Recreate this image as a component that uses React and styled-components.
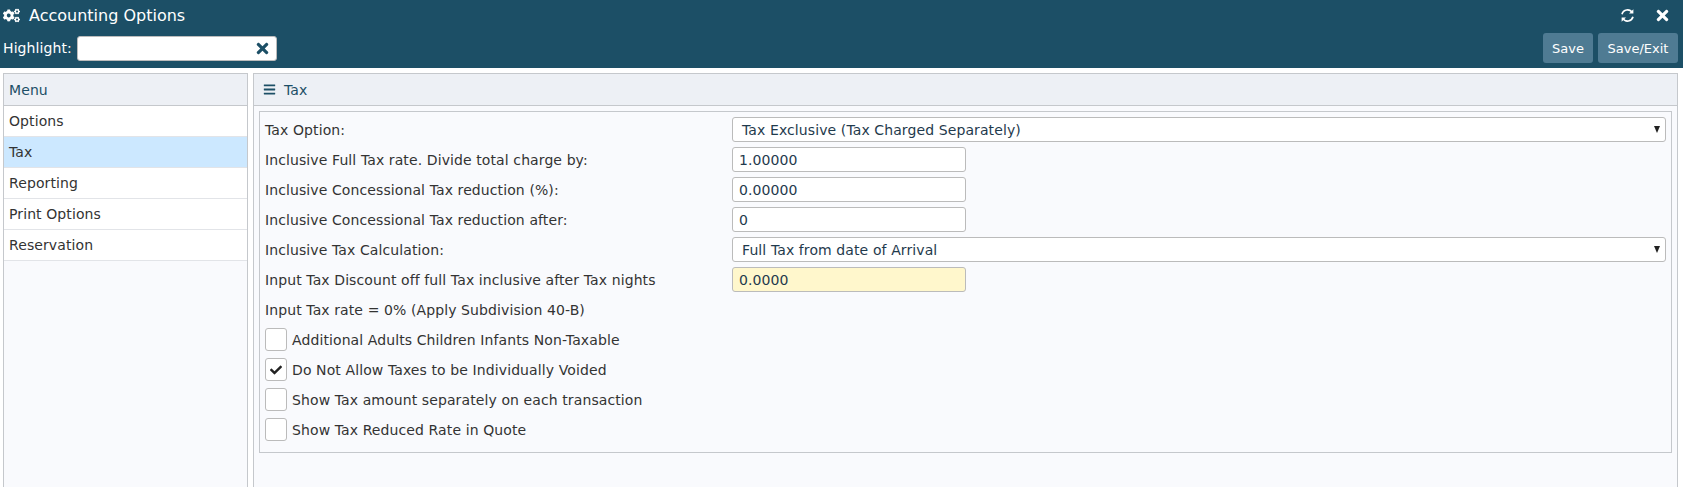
import React from 'react';
import styled, { createGlobalStyle } from 'styled-components';
import { FaCogs, FaCheck, FaBars, FaTimes } from 'react-icons/fa';

const GlobalStyle = createGlobalStyle`
  html, body {
    margin: 0;
    padding: 0;
    background: #fff;
  }
  body {
    font-family: "DejaVu Sans", Verdana, sans-serif;
    font-size: 14px;
    letter-spacing: 0.1px;
    color: #333;
  }
`;

const Page = styled.div`
  width: 1683px;
  height: 487px;
  display: flex;
  flex-direction: column;
  overflow: hidden;
`;

const Header = styled.header`
  height: 68px;
  background: #1c4f66;
  color: #fff;
  display: flex;
  flex-direction: column;
  flex: none;
`;

const TitleRow = styled.div`
  height: 30px;
  display: flex;
  align-items: center;
  padding: 0 12px 0 3px;
`;

const Title = styled.h1`
  margin: 0 0 0 9px;
  font-size: 16px;
  font-weight: 400;
  letter-spacing: 0;
  flex: 1;
`;

const IconButton = styled.span`
  display: flex;
  margin-left: ${p => p.$gap || 0}px;
`;

const ToolRow = styled.div`
  display: flex;
  align-items: center;
  padding: 3px 5px 0 3px;
`;

const HighlightLabel = styled.label`
  margin-right: 5px;
`;

const HighlightBox = styled.div`
  width: 200px;
  height: 25px;
  box-sizing: border-box;
  background: #fff;
  border: 1px solid #bbb;
  border-radius: 3px;
  display: flex;
  align-items: center;
  justify-content: flex-end;
  padding-right: 5px;
  flex: none;
`;

const Spacer = styled.div`
  flex: 1;
`;

const HeadButton = styled.button`
  width: ${p => p.$width}px;
  height: 30px;
  margin-left: 5px;
  padding: 0;
  border: 0;
  border-radius: 3px;
  background: #4f7b93;
  color: #fff;
  font: 13px "DejaVu Sans", Verdana, sans-serif;
`;

const Body = styled.div`
  flex: 1;
  display: flex;
  gap: 5px;
  padding: 5px 5px 0 3px;
  min-height: 0;
`;

const Panel = styled.section`
  box-sizing: border-box;
  width: ${p => (p.$width ? `${p.$width}px` : 'auto')};
  flex: ${p => (p.$width ? 'none' : 1)};
  border: 1px solid #c5c8cc;
  border-bottom: 0;
  background: #f9fafd;
  display: flex;
  flex-direction: column;
`;

const PanelHead = styled.div`
  height: 31px;
  flex: none;
  background: #edf0f5;
  border-bottom: 1px solid #c5c8cc;
  display: flex;
  align-items: center;
  padding-left: ${p => p.$pad}px;
  color: #1c4f66;
`;

const MenuItem = styled.div`
  height: 30px;
  display: flex;
  align-items: center;
  padding-left: 5px;
  background: ${p => (p.$active ? '#cce8ff' : '#fff')};
  border-bottom: 1px solid #e2e4e8;
`;

const HeadIcon = styled.span`
  display: flex;
  margin-right: 8px;
  color: #1c4f66;
`;

const FormBox = styled.div`
  margin: 5px 5px 0;
  height: 342px;
  box-sizing: border-box;
  border: 1px solid #c5c8cc;
  padding: 5px 5px 0;
  display: flex;
  flex-direction: column;
  gap: 5px;
`;

const Row = styled.div`
  height: 25px;
  display: flex;
  align-items: center;
  flex: none;
`;

const RowLabel = styled.label`
  width: 467px;
  flex: none;
`;

const Control = styled.div`
  box-sizing: border-box;
  height: 25px;
  border: 1px solid #bbb;
  border-radius: 3px;
  background: ${p => (p.$warn ? '#fff7cc' : '#fff')};
  display: flex;
  align-items: center;
  color: #1f3a4d;
`;

const TextInput = styled(Control)`
  width: 234px;
  padding-left: 6px;
`;

const SelectBox = styled(Control)`
  flex: 1;
  padding: 0 5px 0 9px;
  justify-content: space-between;
`;

const Caret = styled.span`
  width: 0;
  height: 0;
  border-left: 3.5px solid transparent;
  border-right: 3.5px solid transparent;
  border-top: 7px solid #222;
`;

const CheckBox = styled.span`
  box-sizing: border-box;
  width: 22px;
  height: 23px;
  border: 1px solid #bbb;
  border-radius: 3px;
  background: #fff;
  display: flex;
  align-items: center;
  justify-content: center;
  margin-right: 5px;
  flex: none;
  color: #222;
`;

const RefreshIcon = () => (
  <svg width="15" height="15" viewBox="0 0 15 15" fill="none" stroke="#fff" strokeWidth="1.7">
    <path d="M2 6.2A5.6 5.6 0 0 1 12.2 4.6" />
    <path d="M13 8.8A5.6 5.6 0 0 1 2.8 10.4" />
    <path d="M13.4 1.2v4.4H9z" fill="#fff" stroke="none" />
    <path d="M1.6 13.8V9.4H6z" fill="#fff" stroke="none" />
  </svg>
);

const menuItems = ['Options', 'Tax', 'Reporting', 'Print Options', 'Reservation'];

const checks = [
  { label: 'Additional Adults Children Infants Non-Taxable' },
  { label: 'Do Not Allow Taxes to be Individually Voided', checked: true },
  { label: 'Show Tax amount separately on each transaction' },
  { label: 'Show Tax Reduced Rate in Quote' },
];

export default function App() {
  return (
    <Page>
      <GlobalStyle />
      <Header>
        <TitleRow>
          <FaCogs size={17} color="#fff" />
          <Title>Accounting Options</Title>
          <IconButton>
            <RefreshIcon />
          </IconButton>
          <IconButton $gap={19}>
            <FaTimes size={17} color="#fff" />
          </IconButton>
        </TitleRow>
        <ToolRow>
          <HighlightLabel>Highlight:</HighlightLabel>
          <HighlightBox>
            <FaTimes size={17} color="#1c4f66" />
          </HighlightBox>
          <Spacer />
          <HeadButton $width={50}>Save</HeadButton>
          <HeadButton $width={80}>Save/Exit</HeadButton>
        </ToolRow>
      </Header>
      <Body>
        <Panel $width={245}>
          <PanelHead $pad={5}>Menu</PanelHead>
          {menuItems.map(item => (
            <MenuItem key={item} $active={item === 'Tax'}>
              {item}
            </MenuItem>
          ))}
        </Panel>
        <Panel>
          <PanelHead $pad={9}>
            <HeadIcon>
              <FaBars size={13} />
            </HeadIcon>
            Tax
          </PanelHead>
          <FormBox>
            <Row>
              <RowLabel>Tax Option:</RowLabel>
              <SelectBox>
                Tax Exclusive (Tax Charged Separately)
                <Caret />
              </SelectBox>
            </Row>
            <Row>
              <RowLabel>Inclusive Full Tax rate. Divide total charge by:</RowLabel>
              <TextInput>1.00000</TextInput>
            </Row>
            <Row>
              <RowLabel>Inclusive Concessional Tax reduction (%):</RowLabel>
              <TextInput>0.00000</TextInput>
            </Row>
            <Row>
              <RowLabel>Inclusive Concessional Tax reduction after:</RowLabel>
              <TextInput>0</TextInput>
            </Row>
            <Row>
              <RowLabel>Inclusive Tax Calculation:</RowLabel>
              <SelectBox>
                Full Tax from date of Arrival
                <Caret />
              </SelectBox>
            </Row>
            <Row>
              <RowLabel>Input Tax Discount off full Tax inclusive after Tax nights</RowLabel>
              <TextInput $warn>0.0000</TextInput>
            </Row>
            <Row>
              <RowLabel>Input Tax rate = 0% (Apply Subdivision 40-B)</RowLabel>
            </Row>
            {checks.map(c => (
              <Row key={c.label}>
                <CheckBox>{c.checked && <FaCheck size={12} />}</CheckBox>
                {c.label}
              </Row>
            ))}
          </FormBox>
        </Panel>
      </Body>
    </Page>
  );
}
